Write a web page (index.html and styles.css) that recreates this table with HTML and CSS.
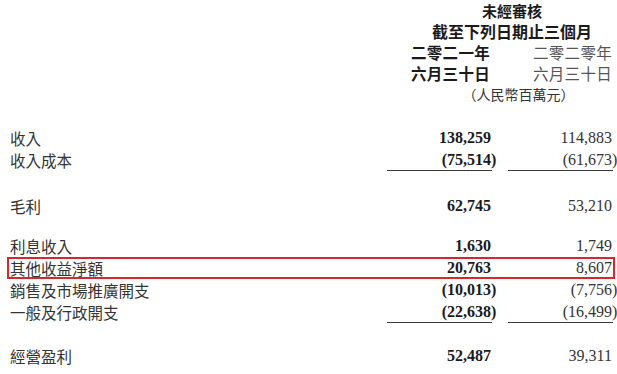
FILE: index.html
```html
<!DOCTYPE html>
<html lang="zh-Hant">
<head>
<meta charset="utf-8">
<link rel="stylesheet" href="styles.css">
</head>
<body>
<div class="sheet">
  <div class="head">
    <div class="title t1">未經審核</div>
    <div class="title t2">截至下列日期止三個月</div>
    <div class="row hrow">
      <span></span>
      <span class="hc cur">二零二一年</span>
      <span class="hc prev">二零二零年</span>
    </div>
    <div class="row hrow">
      <span></span>
      <span class="hc cur">六月三十日</span>
      <span class="hc prev">六月三十日</span>
    </div>
    <div class="unit">（人民幣百萬元）</div>
  </div>

  <div class="row gap-a">
    <span class="lbl">收入</span>
    <span class="num cur">138,259</span>
    <span class="num prev">114,883</span>
  </div>
  <div class="row">
    <span class="lbl">收入成本</span>
    <span class="num cur ul"><span class="neg">(75,514)</span></span>
    <span class="num prev ul"><span class="neg">(61,673)</span></span>
  </div>

  <div class="row gap-b">
    <span class="lbl">毛利</span>
    <span class="num cur">62,745</span>
    <span class="num prev">53,210</span>
  </div>

  <div class="row gap-c">
    <span class="lbl">利息收入</span>
    <span class="num cur">1,630</span>
    <span class="num prev">1,749</span>
  </div>
  <div class="row hl">
    <span class="lbl">其他收益淨額</span>
    <span class="num cur">20,763</span>
    <span class="num prev">8,607</span>
  </div>
  <div class="row">
    <span class="lbl">銷售及市場推廣開支</span>
    <span class="num cur"><span class="neg">(10,013)</span></span>
    <span class="num prev"><span class="neg">(7,756)</span></span>
  </div>
  <div class="row">
    <span class="lbl">一般及行政開支</span>
    <span class="num cur ul"><span class="neg">(22,638)</span></span>
    <span class="num prev ul"><span class="neg">(16,499)</span></span>
  </div>

  <div class="row gap-a">
    <span class="lbl">經營盈利</span>
    <span class="num cur">52,487</span>
    <span class="num prev">39,311</span>
  </div>
</div>
</body>
</html>
```

FILE: styles.css
```css
html, body {
  margin: 0;
  padding: 0;
  background: #ffffff;
}

body {
  width: 617px;
  height: 374px;
  overflow: hidden;
  color: #2a2a2a;
  font-family: "Noto Sans CJK TC", "Noto Sans CJK SC", sans-serif;
}

.sheet {
  display: flex;
  flex-direction: column;
}

.head {
  display: flex;
  flex-direction: column;
}

.title {
  padding-left: 407px;
  height: 21px;
  line-height: 21px;
  text-align: center;
  font-weight: 700;
  color: #1a1a1a;
}

.t1 {
  font-size: 15px;
}

.t2 {
  font-size: 16px;
}

.row {
  display: grid;
  grid-template-columns: 1fr 105px 105px;
  column-gap: 16px;
  padding: 0 4px 0 10px;
  height: 22px;
  line-height: 22px;
  align-items: stretch;
}

.hrow {
  height: 21px;
  line-height: 21px;
}

.hc {
  text-align: right;
  font-size: 15.5px;
  padding-right: 2px;
  letter-spacing: 0.3px;
}

.hc.cur {
  font-weight: 700;
  color: #1a1a1a;
}

.hc.prev {
  font-weight: 400;
  color: #555555;
  padding-right: 1px;
}

.unit {
  height: 21px;
  line-height: 21px;
  padding-left: 420px;
  text-align: center;
  font-size: 14px;
  color: #333333;
}

.lbl {
  font-size: 15.5px;
  font-weight: 400;
  color: #333333;
  white-space: nowrap;
}

.num {
  font-family: "Liberation Serif", "Times New Roman", serif;
  font-size: 16px;
  text-align: right;
  white-space: nowrap;
  box-sizing: border-box;
}

.num.cur {
  font-weight: 700;
  color: #1a1a1a;
  padding-right: 1px;
}

.num.prev {
  font-weight: 400;
  color: #333333;
  padding-right: 1px;
}

.neg {
  margin-right: -0.333em;
}

.ul {
  border-bottom: 1px solid #3a3a3a;
  line-height: 21px;
}

.gap-a {
  margin-top: 22px;
}

.gap-b {
  margin-top: 24px;
}

.gap-c {
  margin-top: 18px;
}

.hl {
  box-sizing: border-box;
  margin: 0 2px 0 7px;
  padding: 0 0 0 1px;
  border: 2px solid #d7262e;
  line-height: 18px;
}
```
